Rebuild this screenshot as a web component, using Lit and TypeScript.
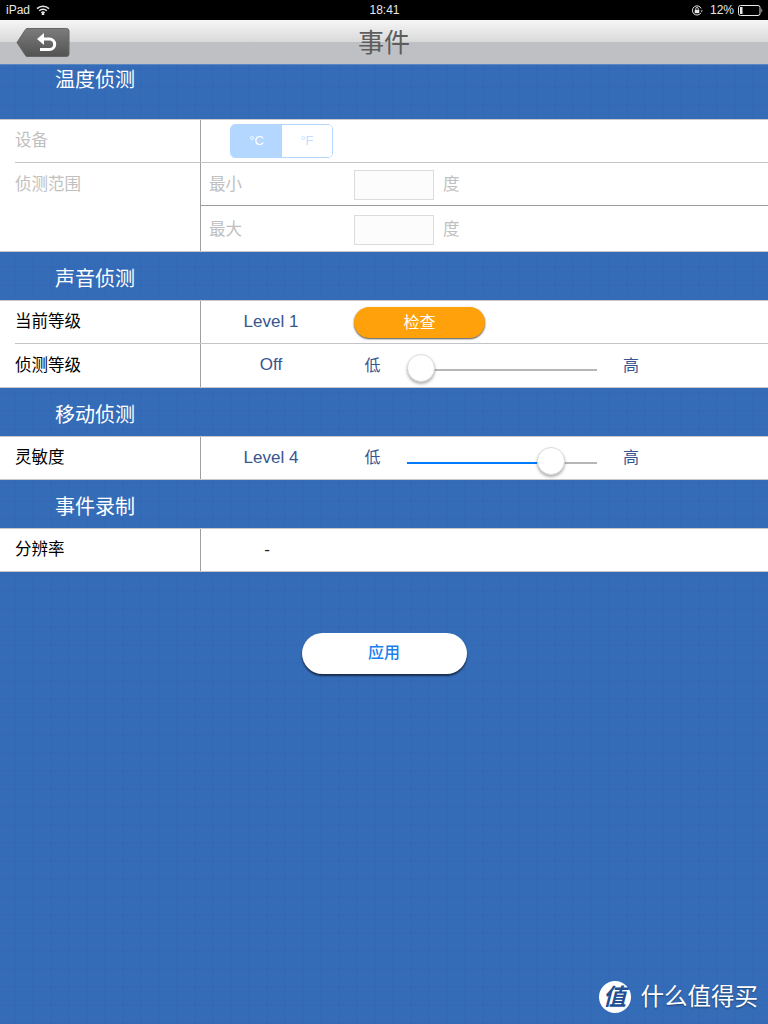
import { LitElement, html, css } from "lit";
import { customElement } from "lit/decorators.js";

@customElement("app-root")
export class AppRoot extends LitElement {
  static styles = css`
    :host {
      display: block;
      width: 768px;
      height: 1024px;
      overflow: hidden;
      position: relative;
      font-family: "Liberation Sans", "Noto Sans CJK SC", sans-serif;
      background-color: #356cb8;
      background-image:
        linear-gradient(to right, rgba(30, 70, 140, 0.05) 2px, transparent 2px),
        linear-gradient(to bottom, rgba(30, 70, 140, 0.05) 2px, transparent 2px);
      background-size: 18px 18px;
      background-position: 14px 14px;
    }
    .status {
      height: 20px;
      background: #000;
      color: #e8e8e8;
      font-size: 12px;
      display: grid;
      grid-template-columns: 1fr auto 1fr;
      align-items: center;
      padding: 0 5px 0 6px;
    }
    .st-left, .st-right { display: flex; align-items: center; }
    .st-left { gap: 6px; }
    .st-right { justify-content: flex-end; gap: 4px; }
    .st-right .lock { margin-right: 3px; }
    .nav {
      height: 44px;
      border-bottom: 1px solid #5b86c4;
      background: linear-gradient(to bottom, #f6f6f6 0%, #d9d9d9 50%, #bfc0c3 51%, #bfc0c3 100%);
      display: grid;
      grid-template-columns: 1fr auto 1fr;
      align-items: center;
      padding: 0 16px;
    }
    .nav svg { display: block; }
    .title { font-size: 26px; color: #5d5d5d; line-height: 44px; padding-top: 1px; }
    .band {
      padding-left: 55px;
      color: #fff;
      font-size: 20px;
      line-height: 30px;
      box-sizing: border-box;
    }
    .band.first { height: 54px; }
    .band.mid { height: 48px; padding-top: 12px; }
    .table {
      background: #fff;
      border-top: 1px solid #c8c8cc;
      border-bottom: 1px solid #c8c8cc;
      color: #000;
      font-size: 16.5px;
    }
    .row {
      display: grid;
      grid-template-columns: 200px 1fr;
      position: relative;
      height: 42px;
    }
    .row.h44 { height: 44px; }
    .row.h89 { height: 89px; }
    .row + .row::before {
      content: "";
      position: absolute;
      left: 15px;
      right: 0;
      top: 0;
      height: 1px;
      background: #c4c4c8;
    }
    .label {
      padding-left: 15px;
      padding-bottom: 5px;
      box-sizing: border-box;
      display: flex;
      align-items: center;
      height: 100%;
    }
    .row.h44 .label { padding-bottom: 3px; }
    .label.top { align-items: flex-start; padding: 9px 0 0 15px; }
    .cell {
      border-left: 1px solid #a0a0a0;
      display: flex;
      align-items: center;
      min-width: 0;
    }
    .dis { color: #c0c0c0; }
    .seg {
      margin-left: 29px;
      width: 103px;
      height: 34px;
      box-sizing: border-box;
      border: 1px solid #b3d7ff;
      border-radius: 5px;
      display: flex;
      overflow: hidden;
      font-size: 13px;
    }
    .seg span { display: flex; align-items: center; justify-content: center; padding-bottom: 2px; box-sizing: border-box; }
    .seg .on { width: 51px; background: #b3d7ff; color: #fff; }
    .seg .off { flex: 1; color: #c4e0ff; background: #fff; }
    .stack { display: block; }
    .sub {
      height: 43px;
      display: flex;
      align-items: center;
      padding-left: 8px;
      box-sizing: border-box;
    }
    .sub .name { width: 145px; padding-bottom: 2px; }
    .sub .unit { padding-bottom: 2px; }
    .input {
      width: 80px;
      height: 30px;
      box-sizing: border-box;
      border: 1px solid #dcdcdc;
      background: #fcfcfc;
      margin: 3px 9px 0 0;
    }
    .sub + .sub { border-top: 1px solid #9c9c9c; height: 46px; }
    .sub + .sub .input { margin-top: 3px; }
    .sub + .sub .name, .sub + .sub .unit { padding-bottom: 1px; }
    .val { width: 140px; text-align: center; color: #37558e; font-size: 17px; padding-bottom: 1px; }
    .val.dash { width: 132px; color: #222; }
    .check {
      margin-left: 13px;
      width: 131px;
      height: 31px;
      padding-bottom: 2px;
      box-sizing: border-box;
      border-radius: 16px;
      background: #ffa10a;
      color: #fff;
      font-size: 16px;
      display: flex;
      align-items: center;
      justify-content: center;
      box-shadow: 0 1px 2px rgba(0, 0, 0, 0.7);
    }
    .lo { width: 63px; text-align: center; color: #37558e; box-sizing: border-box; padding-bottom: 3px; font-size: 16px; }
    .row:not(.h44) .lo, .row:not(.h44) .hi { padding-bottom: 5px; }
    .slider { width: 190px; height: 28px; position: relative; margin-left: 3px; }
    .track { position: absolute; left: 0; right: 0; top: 18px; height: 2px; background: #b6b6b6; }
    .fill { position: absolute; left: 0; top: 18px; height: 2px; background: #007aff; }
    .knob {
      position: absolute;
      top: 3px;
      width: 28px;
      height: 28px;
      border-radius: 50%;
      background: #fff;
      box-sizing: border-box;
      border: 1px solid #dcdcdc;
      box-shadow: 0 2px 3px rgba(0, 0, 0, 0.3);
    }
    .hi { margin-left: 26px; color: #37558e; padding-bottom: 3px; font-size: 16px; }
    .apply-wrap { display: flex; justify-content: center; padding-top: 61px; }
    .apply {
      width: 165px;
      height: 41px;
      padding-bottom: 6px;
      box-sizing: border-box;
      border-radius: 21px;
      background: #fff;
      color: #1a80f0;
      font-size: 16px;
      font-weight: 500;
      display: flex;
      align-items: center;
      justify-content: center;
      box-shadow: 0 2px 2px rgba(0, 0, 0, 0.6);
    }
    .mark {
      position: absolute;
      right: 10px;
      bottom: 11px;
      display: flex;
      align-items: center;
      gap: 10px;
      color: #fff;
      font-size: 23.5px;
      line-height: 32px;
      text-shadow: 0 1px 2px rgba(0, 0, 0, 0.4);
    }
    .badge {
      width: 32px;
      height: 32px;
      border-radius: 50%;
      background: #fff;
      color: #234f92;
      font-size: 23px;
      font-weight: 700;
      font-style: italic;
      display: flex;
      align-items: center;
      justify-content: center;
      text-shadow: none;
    }
  `;

  private slider(pos: number, fill: boolean) {
    return html`<div class="slider">
      <div class="track"></div>
      ${fill ? html`<div class="fill" style="width:${pos}px"></div>` : ""}
      <div class="knob" style="left:${pos}px"></div>
    </div>`;
  }

  render() {
    return html`
      <div class="status">
        <div class="st-left">
          <span>iPad</span>
          <svg width="14" height="10" viewBox="0 0 14 10" fill="none" stroke="#e8e8e8" stroke-width="1.5">
            <path d="M1 3.6a8.6 8.6 0 0 1 12 0" />
            <path d="M3.2 5.8a5.4 5.4 0 0 1 7.6 0" />
            <path d="M5.4 7.8a2.4 2.4 0 0 1 3.2 0" />
            <circle cx="7" cy="9.2" r="0.6" fill="#e8e8e8" />
          </svg>
        </div>
        <span>18:41</span>
        <div class="st-right">
          <svg class="lock" width="12" height="11" viewBox="0 0 12 11" fill="none">
            <path d="M10 7.8A4.6 4.6 0 1 1 10.2 3.5" stroke="#e8e8e8" stroke-width="1" />
            <rect x="3.7" y="4.8" width="4.6" height="3.4" fill="#e8e8e8" />
            <path d="M4.7 4.8V3.8a1.3 1.3 0 0 1 2.6 0v1" stroke="#e8e8e8" stroke-width="0.9" />
            <path d="M9.5 5.6h2.4l-1.2 1.4z" fill="#e8e8e8" />
          </svg>
          <span>12%</span>
          <svg width="25" height="11" viewBox="0 0 25 11" fill="none">
            <rect x="0.5" y="0.5" width="21.5" height="10" rx="2" stroke="#e8e8e8" />
            <rect x="2" y="2" width="2.5" height="7" fill="#e8e8e8" />
            <path d="M23.5 3.5c1 .5 1 3.5 0 4z" fill="#e8e8e8" />
          </svg>
        </div>
      </div>
      <div class="nav">
        <svg width="54" height="29" viewBox="0 0 54 29">
          <defs>
            <linearGradient id="bk" x1="0" y1="0" x2="0" y2="1">
              <stop offset="0" stop-color="#7c7c7c" />
              <stop offset="1" stop-color="#535353" />
            </linearGradient>
          </defs>
          <path d="M1 14.5 9.5 1.5Q10 .5 11 .5H50.5a2.5 2.5 0 0 1 2.5 2.5v23a2.5 2.5 0 0 1-2.5 2.5H11Q10 28.500 9.500 27.500z" fill="url(#bk)" stroke="#666" />
          <path d="M27 11h6.500a5.200 5.200 0 0 1 0 10.400H24" fill="none" stroke="#fff" stroke-width="3" />
          <path d="M21 11 28 5v12z" fill="#fff" />
        </svg>
        <div class="title">事件</div>
        <div></div>
      </div>

      <div class="band first">温度侦测</div>
      <div class="table">
        <div class="row">
          <div class="label dis">设备</div>
          <div class="cell">
            <div class="seg"><span class="on">°C</span><span class="off">°F</span></div>
          </div>
        </div>
        <div class="row h89">
          <div class="label dis top">侦测范围</div>
          <div class="cell stack dis">
            <div class="sub"><span class="name">最小</span><div class="input"></div><span class="unit">度</span></div>
            <div class="sub"><span class="name">最大</span><div class="input"></div><span class="unit">度</span></div>
          </div>
        </div>
      </div>

      <div class="band mid">声音侦测</div>
      <div class="table">
        <div class="row">
          <div class="label">当前等级</div>
          <div class="cell"><span class="val">Level 1</span><div class="check">检查</div></div>
        </div>
        <div class="row h44">
          <div class="label">侦测等级</div>
          <div class="cell">
            <span class="val">Off</span><span class="lo">低</span>${this.slider(0, false)}<span class="hi">高</span>
          </div>
        </div>
      </div>

      <div class="band mid">移动侦测</div>
      <div class="table">
        <div class="row">
          <div class="label">灵敏度</div>
          <div class="cell">
            <span class="val">Level 4</span><span class="lo">低</span>${this.slider(130, true)}<span class="hi">高</span>
          </div>
        </div>
      </div>

      <div class="band mid">事件录制</div>
      <div class="table">
        <div class="row">
          <div class="label">分辨率</div>
          <div class="cell"><span class="val dash">-</span></div>
        </div>
      </div>

      <div class="apply-wrap"><div class="apply">应用</div></div>

      <div class="mark"><span class="badge">值</span><span>什么值得买</span></div>
    `;
  }
}
